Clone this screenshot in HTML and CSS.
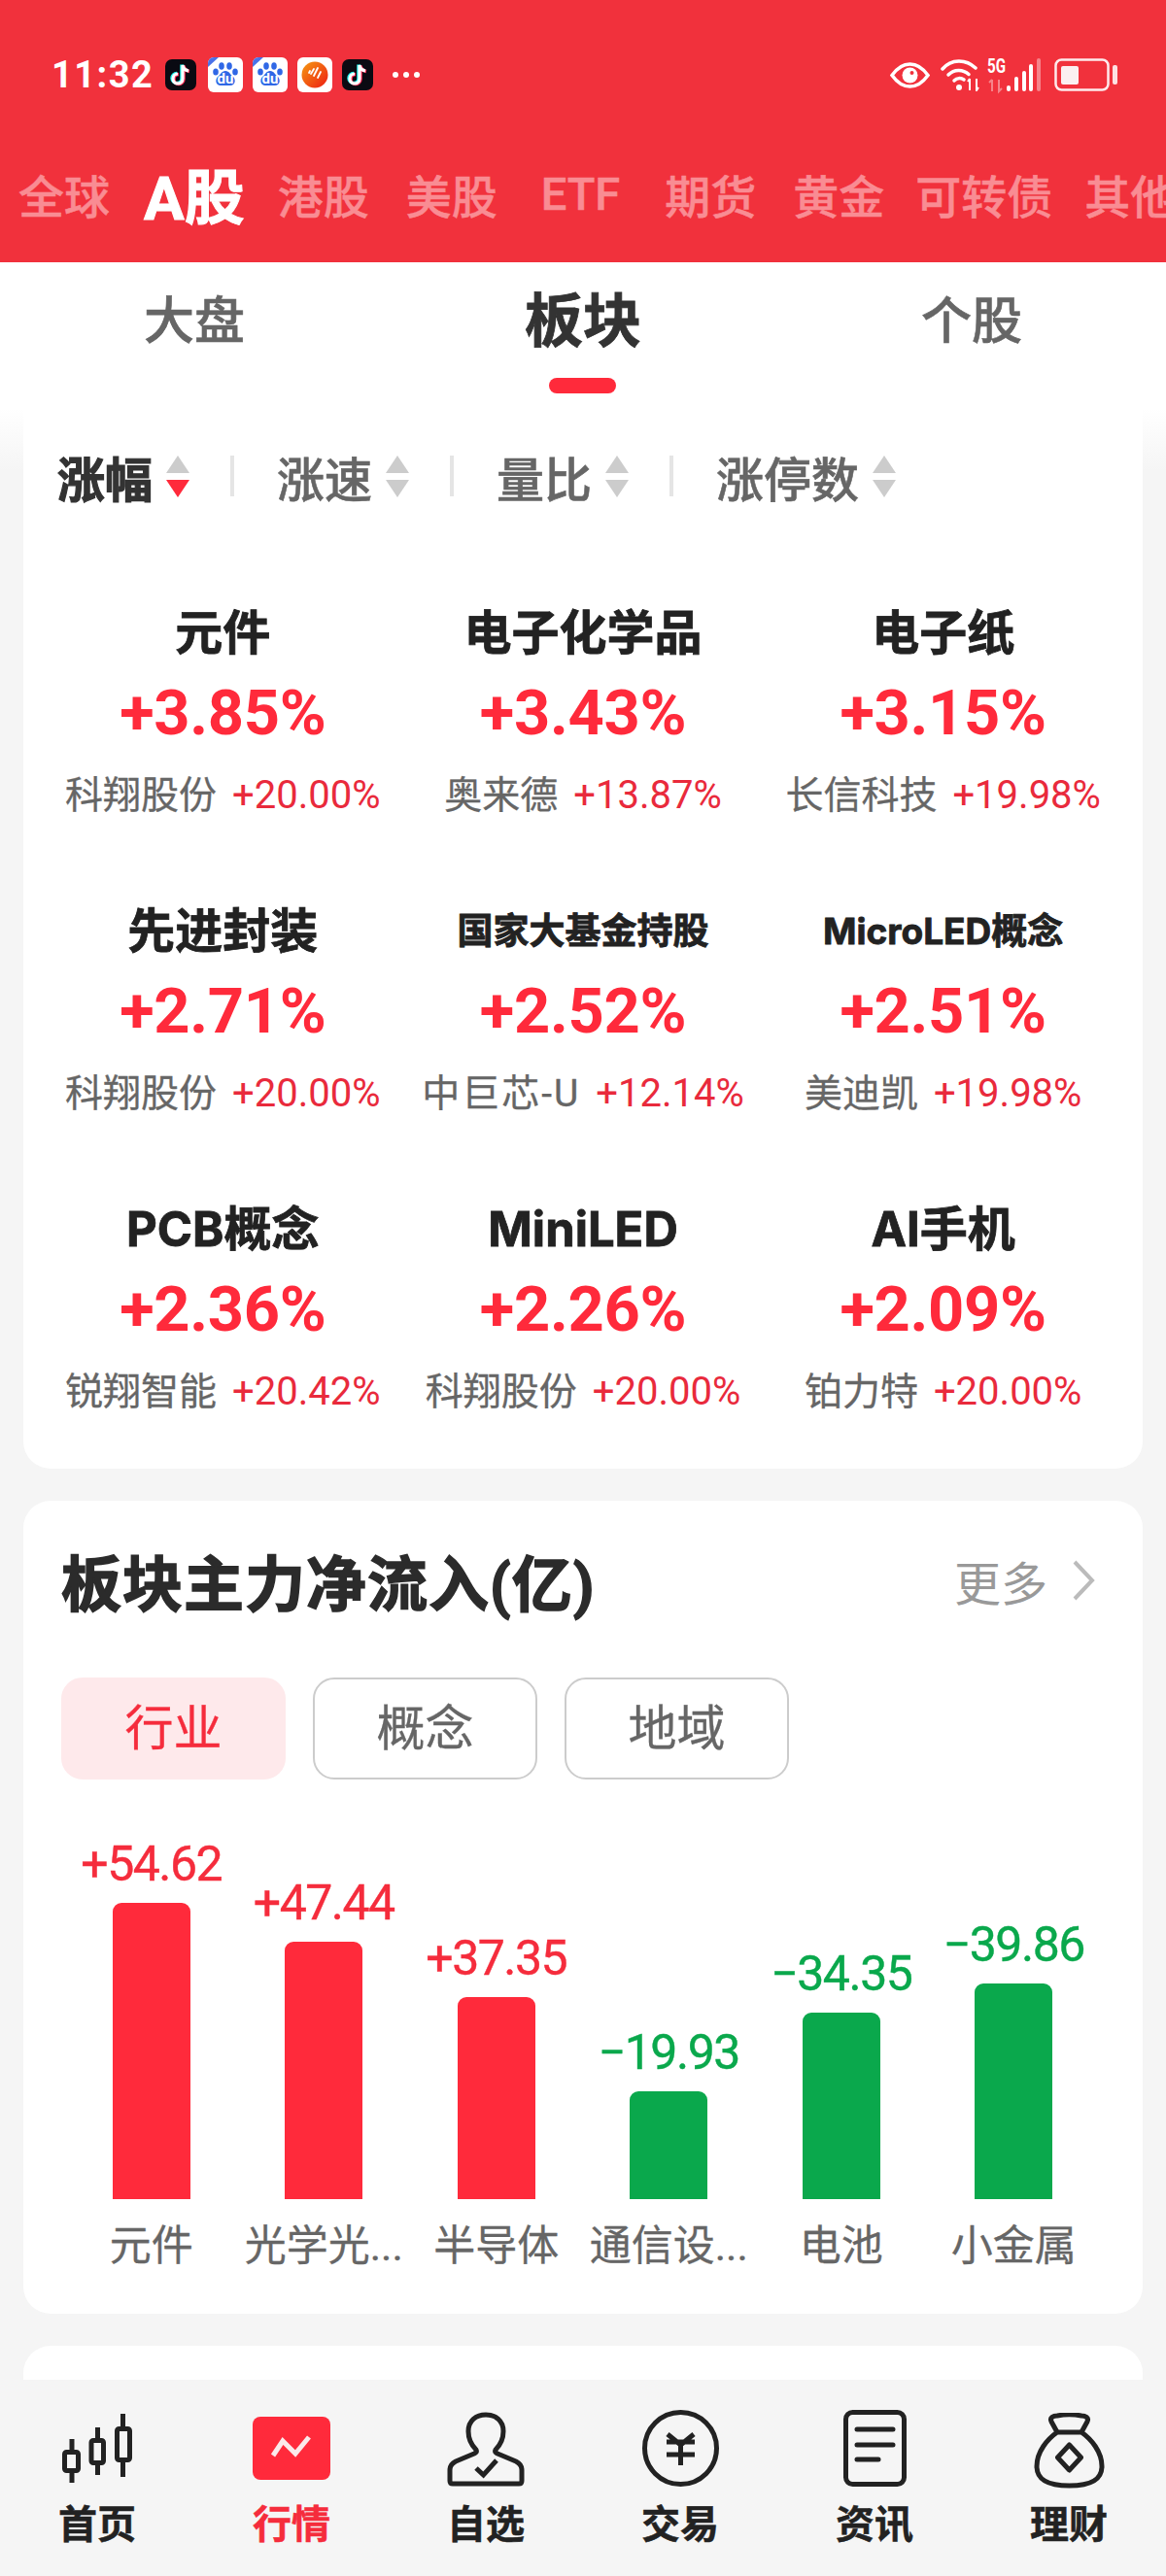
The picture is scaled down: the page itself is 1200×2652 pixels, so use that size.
FILE: index.html
```html
<!DOCTYPE html>
<html>
<head>
    <meta charset="utf-8">
    <title>行情</title>
    <link rel="stylesheet" href="styles.css">
</head>
<body>

    <!-- Shared app icon for the status bar -->
    <svg class="defs" width="0" height="0">
        <symbol id="tiktok" viewBox="0 0 32 32">
            <rect width="32" height="32" rx="7" fill="#0a0a12"/>
            <path d="M18 6v14a5 5 0 1 1-5-5M18 6c.5 3.500 3 5.500 6 6" fill="none" stroke="#25f4ee" stroke-width="3.500" transform="translate(-1 -.6)"/>
            <path d="M18 6v14a5 5 0 1 1-5-5M18 6c.5 3.500 3 5.500 6 6" fill="none" stroke="#fe2c55" stroke-width="3.500" transform="translate(1 .6)"/>
            <path d="M18 6v14a5 5 0 1 1-5-5M18 6c.5 3.500 3 5.500 6 6" fill="none" stroke="#fff" stroke-width="3.200"/>
        </symbol>
    </svg>

    <!-- Red header -->
    <div class="header">
        <div class="status-bar">
            <span class="clock">11:32</span>
            <svg class="app-narrow"><use href="#tiktok"/></svg>
            <svg class="app-wide" viewBox="0 0 36 36">
                <rect width="36" height="36" rx="6" fill="#fff"/>
                <path d="M0 10V6a6 6 0 0 1 6-6h5z" fill="#4a72e8"/>
                <g fill="#2f67e6">
                    <ellipse cx="8" cy="15" rx="2.800" ry="3.600"/>
                    <ellipse cx="14" cy="9" rx="2.800" ry="3.800"/>
                    <ellipse cx="22" cy="9" rx="2.800" ry="3.800"/>
                    <ellipse cx="28" cy="15" rx="2.800" ry="3.600"/>
                    <path d="M18 14c4 0 5 4 8 6 3 3 2 9-3 9H13c-5 0-6-6-3-9 3-2 4-6 8-6z"/>
                </g>
                <text x="18" y="27" class="du">du</text>
            </svg>
            <svg class="app-wide" viewBox="0 0 36 36">
                <rect width="36" height="36" rx="6" fill="#fff"/>
                <path d="M0 10V6a6 6 0 0 1 6-6h5z" fill="#4a72e8"/>
                <g fill="#2f67e6">
                    <ellipse cx="8" cy="15" rx="2.800" ry="3.600"/>
                    <ellipse cx="14" cy="9" rx="2.800" ry="3.800"/>
                    <ellipse cx="22" cy="9" rx="2.800" ry="3.800"/>
                    <ellipse cx="28" cy="15" rx="2.800" ry="3.600"/>
                    <path d="M18 14c4 0 5 4 8 6 3 3 2 9-3 9H13c-5 0-6-6-3-9 3-2 4-6 8-6z"/>
                </g>
                <text x="18" y="27" class="du">du</text>
            </svg>
            <svg class="app-wide" viewBox="0 0 36 36">
                <defs>
                    <linearGradient id="orange" x1="0" y1="0" x2="1" y2="1">
                        <stop offset="0" stop-color="#f59a12"/>
                        <stop offset="1" stop-color="#ee1c12"/>
                    </linearGradient>
                </defs>
                <rect width="36" height="36" rx="6" fill="#fff"/>
                <circle cx="18" cy="18" r="13.500" fill="url(#orange)"/>
                <path d="M13 14l-1 2M17 12l-3 5M21 11l-4 8M24 15l-3 6" stroke="#fff" stroke-width="1.800" stroke-linecap="round"/>
            </svg>
            <svg class="app-narrow"><use href="#tiktok"/></svg>
            <span class="status-dots"><i></i><i></i><i></i></span>
            <span class="status-gap"></span>
            <svg class="eye" viewBox="0 0 41 27">
                <path d="M2 13.500C8 5 14 2 20.500 2S33 5 39 13.500C33 22 27 25 20.500 25S8 22 2 13.500z" fill="none" stroke="#fff" stroke-width="3.500"/>
                <circle cx="20.500" cy="13.500" r="8" fill="#fff"/>
                <circle cx="22.500" cy="11" r="2" fill="#f1313c"/>
            </svg>
            <svg class="wifi" viewBox="0 0 40 34">
                <g fill="none" stroke="#fff" stroke-width="3.500" stroke-linecap="round">
                    <path d="M2 11C11 .5 26 .5 36 10"/>
                    <path d="M8 17c6-6 15-6 21-.5"/>
                    <path d="M14 23c3-3 7-3 10-1"/>
                </g>
                <circle cx="19" cy="30" r="3" fill="#fff"/>
                <path d="M30 21v12M28 24l2-3M37 21v12l2-3" fill="none" stroke="#fff" stroke-width="2"/>
            </svg>
            <svg class="signal" viewBox="0 0 55 34">
                <text x="0" y="15" class="five-g" textLength="19" lengthAdjust="spacingAndGlyphs">5G</text>
                <path d="M5 22v12M2 25l3-3M12 22v12l3-3" fill="none" stroke="#fff" stroke-opacity=".4" stroke-width="2"/>
                <rect x="20" y="28" width="4" height="6" rx="2" fill="#fff"/>
                <rect x="28" y="19" width="4" height="15" rx="2" fill="#fff"/>
                <rect x="36" y="13" width="4" height="21" rx="2" fill="#fff"/>
                <rect x="43" y="6" width="4" height="28" rx="2" fill="#fff"/>
                <rect x="51" y="0" width="4" height="34" rx="2" fill="#fff" fill-opacity=".4"/>
            </svg>
            <svg class="battery" viewBox="0 0 65 34">
                <rect x="1.500" y="1.500" width="54" height="31" rx="6" fill="none" stroke="#fff" stroke-width="2.500" stroke-opacity=".9"/>
                <rect x="7" y="8" width="18" height="19" rx="2" fill="#fbeff1"/>
                <rect x="60" y="7" width="5" height="20" rx="2" fill="#fff" fill-opacity=".85"/>
            </svg>
        </div>
        <div class="market-tabs">
            <span>全球</span>
            <span class="active">A股</span>
            <span>港股</span>
            <span>美股</span>
            <span class="latin">ETF</span>
            <span>期货</span>
            <span>黄金</span>
            <span class="tight">可转债</span>
            <span>其他</span>
        </div>
    </div>

    <!-- Main Content Area -->
    <div class="content">
        <div class="sub-tabs">
            <div class="sub-tab">大盘</div>
            <div class="sub-tab active">板块</div>
            <div class="sub-tab">个股</div>
        </div>

        <div class="cards">
            <div class="card sector-card">
                <div class="sort-row">
                    <div class="sort-item active">涨幅<span class="arrows"><i class="up"></i><i class="down"></i></span></div>
                    <div class="sort-item">涨速<span class="arrows"><i class="up"></i><i class="down"></i></span></div>
                    <div class="sort-item">量比<span class="arrows"><i class="up"></i><i class="down"></i></span></div>
                    <div class="sort-item">涨停数<span class="arrows"><i class="up"></i><i class="down"></i></span></div>
                </div>
                <div class="sector-grid">
                    <div class="sector">
                        <div class="sector-name">元件</div>
                        <div class="sector-pct">+3.85%</div>
                        <div class="sector-sub"><span>科翔股份</span><b>+20.00%</b></div>
                    </div>
                    <div class="sector">
                        <div class="sector-name">电子化学品</div>
                        <div class="sector-pct">+3.43%</div>
                        <div class="sector-sub"><span>奥来德</span><b>+13.87%</b></div>
                    </div>
                    <div class="sector">
                        <div class="sector-name">电子纸</div>
                        <div class="sector-pct">+3.15%</div>
                        <div class="sector-sub"><span>长信科技</span><b>+19.98%</b></div>
                    </div>
                    <div class="sector">
                        <div class="sector-name">先进封装</div>
                        <div class="sector-pct">+2.71%</div>
                        <div class="sector-sub"><span>科翔股份</span><b>+20.00%</b></div>
                    </div>
                    <div class="sector">
                        <div class="sector-name small">国家大基金持股</div>
                        <div class="sector-pct">+2.52%</div>
                        <div class="sector-sub"><span class="wide">中巨芯-U</span><b>+12.14%</b></div>
                    </div>
                    <div class="sector">
                        <div class="sector-name small">MicroLED概念</div>
                        <div class="sector-pct">+2.51%</div>
                        <div class="sector-sub"><span>美迪凯</span><b>+19.98%</b></div>
                    </div>
                    <div class="sector">
                        <div class="sector-name">PCB概念</div>
                        <div class="sector-pct">+2.36%</div>
                        <div class="sector-sub"><span>锐翔智能</span><b>+20.42%</b></div>
                    </div>
                    <div class="sector">
                        <div class="sector-name">MiniLED</div>
                        <div class="sector-pct">+2.26%</div>
                        <div class="sector-sub"><span>科翔股份</span><b>+20.00%</b></div>
                    </div>
                    <div class="sector">
                        <div class="sector-name">AI手机</div>
                        <div class="sector-pct">+2.09%</div>
                        <div class="sector-sub"><span>铂力特</span><b>+20.00%</b></div>
                    </div>
                </div>
            </div>

            <div class="card flow-card">
                <div class="flow-head">
                    <h2>板块主力净流入(亿)</h2>
                    <div class="more">更多
                        <svg class="chevron" viewBox="0 0 24 42"><path d="M3 2l18 19L3 40" fill="none" stroke="#bbb" stroke-width="4"/></svg>
                    </div>
                </div>
                <div class="chips">
                    <div class="chip active">行业</div>
                    <div class="chip">概念</div>
                    <div class="chip">地域</div>
                </div>
                <div class="chart">
                    <div class="column rise">
                        <div class="value">+54.62</div>
                        <div class="bar" style="height: 305px"></div>
                        <div class="label">元件</div>
                    </div>
                    <div class="column rise">
                        <div class="value">+47.44</div>
                        <div class="bar" style="height: 265px"></div>
                        <div class="label">光学光...</div>
                    </div>
                    <div class="column rise">
                        <div class="value">+37.35</div>
                        <div class="bar" style="height: 208px"></div>
                        <div class="label">半导体</div>
                    </div>
                    <div class="column fall">
                        <div class="value">−19.93</div>
                        <div class="bar" style="height: 111px"></div>
                        <div class="label">通信设...</div>
                    </div>
                    <div class="column fall">
                        <div class="value">−34.35</div>
                        <div class="bar" style="height: 192px"></div>
                        <div class="label">电池</div>
                    </div>
                    <div class="column fall">
                        <div class="value">−39.86</div>
                        <div class="bar" style="height: 222px"></div>
                        <div class="label">小金属</div>
                    </div>
                </div>
            </div>

            <div class="card next-card"></div>
        </div>
    </div>

    <!-- Bottom navigation -->
    <div class="bottom-nav">
        <div class="nav-item">
            <div class="nav-slot top-35">
                <svg viewBox="0 0 72 71" width="72" height="71">
                    <g fill="none" stroke="#222" stroke-width="5">
                        <rect x="2.500" y="39.500" width="14" height="19" rx="2"/>
                        <path d="M10 26v11M10 61v10"/>
                        <rect x="30" y="27.500" width="12.500" height="23" rx="2"/>
                        <path d="M36.500 14v11M36.500 53v10"/>
                        <rect x="56.500" y="15.500" width="13" height="32" rx="2"/>
                        <path d="M62.500 0v13M62.500 50v15"/>
                    </g>
                </svg>
            </div>
            <span>首页</span>
        </div>
        <div class="nav-item active">
            <div class="nav-slot top-38">
                <svg viewBox="0 0 80 65" width="80" height="65">
                    <rect width="80" height="65" rx="8" fill="#ff2a3b"/>
                    <path d="M21 40l10-15 13 13 14-17" fill="none" stroke="#fbe9ea" stroke-width="5"/>
                </svg>
            </div>
            <span>行情</span>
        </div>
        <div class="nav-item">
            <div class="nav-slot top-33">
                <svg viewBox="0 0 80 77" width="80" height="77">
                    <path d="M30 39C24 33 22 27 22 20 22 9 30 3 40 3s18 6 18 17c0 7-2 13-8 19-1 2 0 3 2 4l19 8c4 2 6 5 6 9v11c0 2-1 3-3 3H6c-2 0-3-1-3-3V60c0-4 2-7 6-9l19-8c2-1 3-2 2-4z" fill="none" stroke="#222" stroke-width="5" stroke-linejoin="round"/>
                    <path d="M30 58l7.500 7L51 50" fill="none" stroke="#222" stroke-width="5"/>
                </svg>
            </div>
            <span>自选</span>
        </div>
        <div class="nav-item">
            <div class="nav-slot top-31">
                <svg viewBox="0 0 79 79" width="79" height="79">
                    <circle cx="39.500" cy="39.500" r="37" fill="none" stroke="#222" stroke-width="5"/>
                    <path d="M26 25l13.500 11L53 25M25 33h29M25 46h29M39.500 33v24" fill="none" stroke="#222" stroke-width="5"/>
                </svg>
            </div>
            <span>交易</span>
        </div>
        <div class="nav-item">
            <div class="nav-slot top-31">
                <svg viewBox="0 0 65 79" width="65" height="79">
                    <rect x="2.500" y="2.500" width="60" height="74" rx="7" fill="none" stroke="#222" stroke-width="5"/>
                    <path d="M14 20h37M14 36h37M14 51h22" fill="none" stroke="#222" stroke-width="5" stroke-linecap="round"/>
                </svg>
            </div>
            <span>资讯</span>
        </div>
        <div class="nav-item">
            <div class="nav-slot top-34">
                <svg viewBox="0 0 73 78" width="73" height="78">
                    <g fill="none" stroke="#222" stroke-width="5" stroke-linejoin="round">
                        <path d="M24 20C14 27 3 40 3 55c0 14 11 20 33.500 20S70 69 70 55c0-15-11-28-21-35z"/>
                        <path d="M24 20l-6-11c-2-4 2-6 6-6 8-1.500 17-1.500 25 0 4 0 8 2 6 6l-6 11"/>
                        <path d="M36.500 33l12 13-12 13-12-13z"/>
                    </g>
                </svg>
            </div>
            <span>理财</span>
        </div>
    </div>

</body>
</html>
```

FILE: styles.css
```css
/* General Body Styles */
body {
    font-family: Roboto, 'Noto Sans CJK SC', sans-serif;
    background-color: #f5f5f5;
    margin: 0;
    padding: 0;
    width: 1200px;
    height: 2652px;
    display: flex;
    flex-direction: column;
    overflow: hidden;
}

.defs {
    position: absolute;
}

/* Red Header */
.header {
    height: 270px;
    flex-shrink: 0;
    background-color: #f1313c;
    color: white;
    overflow: hidden;
}

.status-bar {
    height: 154px;
    padding: 0 50px 0 53px;
    box-sizing: border-box;
    display: flex;
    align-items: center;
}

.clock {
    font-size: 38px;
    font-weight: 700;
    letter-spacing: 1.500px;
    width: 117px;
}

.app-narrow {
    width: 32px;
    height: 32px;
    margin-right: 12px;
}

.app-wide {
    width: 36px;
    height: 36px;
    margin-right: 10px;
}

.status-dots {
    display: flex;
    gap: 5px;
    margin-left: 8px;
}

.status-dots i {
    width: 6px;
    height: 6px;
    border-radius: 50%;
    background: #fff;
}

.status-gap {
    flex: 1;
}

.eye {
    width: 41px;
    height: 27px;
    margin-right: 11px;
}

.wifi {
    width: 40px;
    height: 34px;
    margin-right: 8px;
}

.signal {
    width: 55px;
    height: 34px;
    margin-right: 14px;
    overflow: visible;
}

.battery {
    width: 65px;
    height: 34px;
}

.du {
    font-family: Roboto, sans-serif;
    font-size: 15px;
    font-weight: 700;
    fill: #fff;
    text-anchor: middle;
}

.five-g {
    font-family: Roboto, sans-serif;
    font-size: 21px;
    font-weight: 700;
    fill: #fff;
}

.market-tabs {
    display: flex;
    align-items: center;
    height: 90px;
    padding-left: 19px;
    gap: 38px;
    white-space: nowrap;
    font-size: 47px;
    font-weight: 500;
    -webkit-text-stroke: .5px #f98c93;
    color: #f98c93;
}

.market-tabs .active {
    font-size: 62px;
    font-weight: 700;
    margin: 0 -4px 0 -3px;
    -webkit-text-stroke: 1px white;
    color: white;
}

.market-tabs .latin {
    padding: 0 8px 0 7px;
}

.market-tabs .tight {
    margin: 0 -5px 0 -6px;
}

/* Main Content Area */
.content {
    flex: 1;
    overflow: hidden;
    background: linear-gradient(#fff 150px, #f5f5f5 215px);
}

.sub-tabs {
    height: 150px;
    display: grid;
    grid-template-columns: repeat(3, 1fr);
    background: white;
}

.sub-tab {
    text-align: center;
    font-size: 52px;
    font-weight: 500;
    -webkit-text-stroke: .6px #666;
    line-height: 70px;
    padding-top: 27px;
    color: #666;
    position: relative;
}

.sub-tab.active {
    font-size: 60px;
    font-weight: 700;
    -webkit-text-stroke: .8px #333;
    color: #333;
}

.sub-tab.active::after {
    content: '';
    position: absolute;
    left: 50%;
    top: 119px;
    width: 69px;
    height: 16px;
    margin-left: -35px;
    border-radius: 8px;
    background: #ff2a3b;
}

.cards {
    display: flex;
    flex-direction: column;
    gap: 33px;
    padding: 0 24px;
}

.card {
    background: white;
    border-radius: 28px;
}

/* Sort row + sector grid */
.sector-card {
    padding: 40px 20px 0;
    height: 1092px;
    box-sizing: border-box;
    border-top-left-radius: 0;
    border-top-right-radius: 0;
}

.sort-row {
    display: flex;
    padding-left: 15px;
    height: 60px;
}

.sort-item {
    display: flex;
    align-items: center;
    font-size: 49px;
    font-weight: 500;
    -webkit-text-stroke: .6px #666;
    color: #666;
}

.sort-item.active {
    font-weight: 700;
    -webkit-text-stroke: 1.2px #333;
    color: #333;
}

.sort-item + .sort-item {
    border-left: 4px solid transparent;
    margin-left: 42px;
    padding-left: 44px;
    position: relative;
}

.sort-item + .sort-item::before {
    content: '';
    position: absolute;
    left: -4px;
    top: 9px;
    width: 4px;
    height: 42px;
    background: #e5e5e5;
}

.arrows {
    display: flex;
    flex-direction: column;
    gap: 7px;
    margin-left: 14px;
}

.arrows i {
    width: 0;
    height: 0;
    border-left: 12px solid transparent;
    border-right: 12px solid transparent;
}

.arrows .up {
    border-bottom: 18px solid #ccc;
}

.arrows .down {
    border-top: 18px solid #ccc;
}

.sort-item.active .down {
    border-top-color: #ff2a3b;
}

.sector-grid {
    display: grid;
    grid-template-columns: repeat(3, 1fr);
    row-gap: 85px;
    margin-top: 102px;
    text-align: center;
}

.sector-name {
    font-family: Inter, 'Noto Sans CJK SC', sans-serif;
    font-size: 49px;
    font-weight: 700;
    -webkit-text-stroke: .8px #222;
    line-height: 60px;
    color: #222;
}

.sector-name.small {
    font-size: 37px;
}

.sector-pct {
    font-size: 65px;
    font-weight: 700;
    letter-spacing: -.3px;
    line-height: 80px;
    margin-top: 12px;
    color: #ff2a3b;
}

.sector-sub {
    display: flex;
    justify-content: center;
    gap: 16px;
    line-height: 50px;
    margin-top: 20px;
    white-space: nowrap;
}

.sector-sub span {
    font-size: 39px;
    -webkit-text-stroke: .3px #666;
    color: #666;
}

.sector-sub .wide {
    letter-spacing: 2px;
}

.sector-sub b {
    font-size: 40px;
    font-weight: 400;
    color: #e92a3c;
}

/* Net inflow card */
.flow-card {
    padding: 42px 40px 40px 39px;
}

.flow-head {
    display: flex;
    justify-content: space-between;
    align-items: center;
    height: 80px;
}

.flow-head h2 {
    margin: 0;
    font-size: 62px;
    font-weight: 700;
    -webkit-text-stroke: 1.5px #2b2b2b;
    letter-spacing: 1px;
    color: #2b2b2b;
}

.more {
    display: flex;
    align-items: center;
    gap: 25px;
    font-size: 48px;
    color: #999;
    padding-right: 9px;
}

.chevron {
    width: 24px;
    height: 42px;
}

.chips {
    display: flex;
    gap: 28px;
    margin-top: 60px;
}

.chip {
    width: 231px;
    height: 105px;
    box-sizing: border-box;
    border: 2px solid #ccc;
    border-radius: 22px;
    text-align: center;
    font-size: 50px;
    -webkit-text-stroke: .3px #666;
    line-height: 103px;
    color: #666;
}

.chip.active {
    border-color: #fee9eb;
    background: #fee9eb;
    -webkit-text-stroke: .3px #f52c3c;
    color: #f52c3c;
}

.chart {
    display: grid;
    grid-template-columns: repeat(6, 1fr);
    align-items: end;
    margin: 57px 4px 0;
}

.column {
    display: flex;
    flex-direction: column;
    align-items: center;
}

.value {
    font-size: 50px;
    letter-spacing: -1.500px;
    -webkit-text-stroke: .4px;
    line-height: 60px;
    margin-bottom: 10px;
}

.bar {
    width: 80px;
    border-radius: 9px 9px 0 0;
}

.label {
    font-size: 43px;
    -webkit-text-stroke: .3px #666;
    line-height: 60px;
    margin-top: 18px;
    color: #666;
    white-space: nowrap;
}

.rise .value {
    color: #f52c3c;
}

.rise .bar {
    background: #ff2a3b;
}

.fall .value {
    color: #0aa84c;
}

.fall .bar {
    background: #0aa84c;
}

.next-card {
    height: 200px;
}

/* Bottom Navigation */
.bottom-nav {
    height: 202px;
    flex-shrink: 0;
    display: grid;
    grid-template-columns: repeat(6, 1fr);
    background: #f5f5f5;
}

.nav-item {
    font-size: 40px;
    font-weight: 700;
    -webkit-text-stroke: .5px #222;
    line-height: 60px;
    color: #222;
    text-align: center;
}

.nav-item.active {
    -webkit-text-stroke: .5px #f52c3c;
    color: #f52c3c;
}

.nav-slot {
    height: 120px;
    box-sizing: border-box;
    display: flex;
    justify-content: center;
}

.nav-slot svg {
    display: block;
}

.top-31 { padding-top: 31px; }
.top-33 { padding-top: 33px; }
.top-34 { padding-top: 34px; }
.top-35 { padding-top: 35px; }
.top-38 { padding-top: 38px; }
```
